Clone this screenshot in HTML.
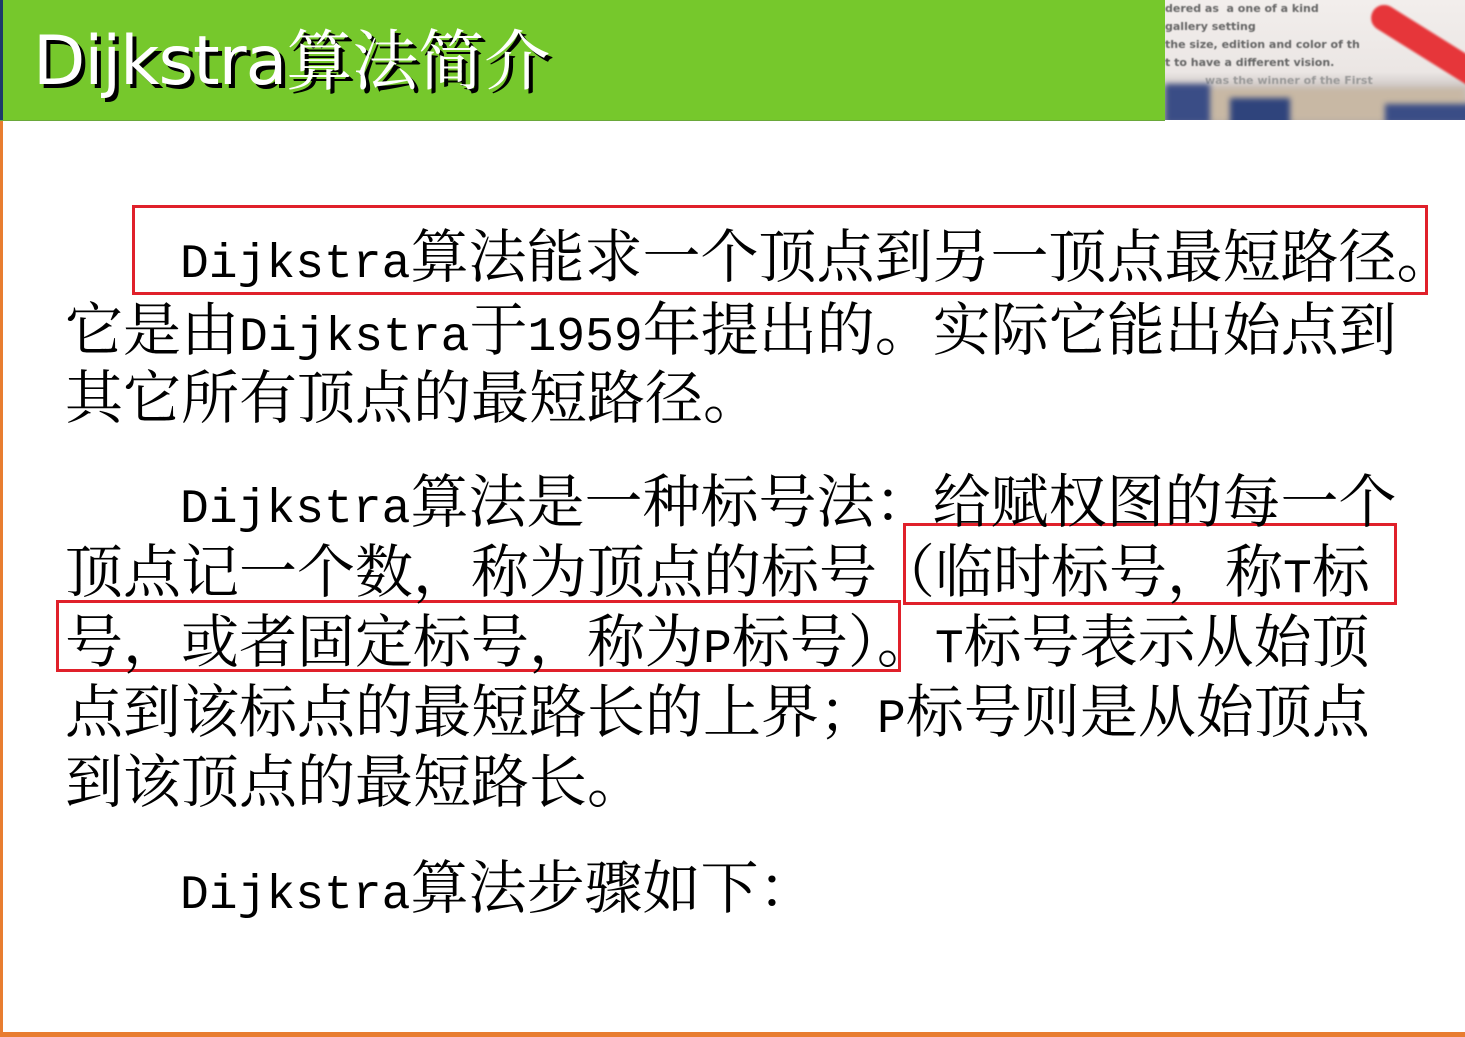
<!DOCTYPE html>
<html><head><meta charset="utf-8"><style>
body{margin:0;width:1465px;height:1037px;overflow:hidden;background:#fff;position:relative;font-family:"Noto Serif CJK SC","Noto Serif CJK JP","Noto Serif CJK",serif;}
.hdr{position:absolute;left:0;top:0;width:1165px;height:120px;background:#76c82c;border-bottom:1px solid #6aa83a;}
.lb{position:absolute;left:0;top:0;width:3px;height:120px;background:#1e3a6a;}
.ol{position:absolute;left:0;top:121px;width:3px;height:916px;background:#e87d30;}
.ob{position:absolute;left:0;top:1032px;width:1465px;height:5px;background:#e87d30;}
.title{position:absolute;left:33px;top:16px;font-size:66px;line-height:80px;color:#fff;white-space:nowrap;text-shadow:4px 4px 0 #000;}
.title .l{font-family:"DejaVu Sans","Liberation Sans",sans-serif;font-size:68px;letter-spacing:-1px}
.title .c{font-family:"Noto Serif CJK SC","Noto Serif CJK JP",serif;}
.photo{position:absolute;left:1165px;top:0;width:300px;height:120px;overflow:hidden;background:linear-gradient(180deg,#f2eeec 0%,#ebe6e4 60%,#c9c2c0 75%,#b7aca2 100%);}
.ln{position:absolute;font-family:"DejaVu Sans",sans-serif;font-weight:bold;font-size:11px;color:#666;white-space:nowrap;filter:blur(.6px)}
.t{position:absolute;font-size:58px;line-height:70px;white-space:nowrap;color:#000;}
.t .m{font-family:"Liberation Mono",monospace;font-size:48px;}
.box{position:absolute;border:3px solid #e0202a;box-sizing:border-box;}
</style></head><body>
<div class="hdr"></div><div class="lb"></div><div class="ol"></div><div class="ob"></div>
<div class="title"><span class="l">Dijkstra</span><span class="c">算法简介</span></div>
<div class="photo">
<div class="ln" style="left:0;top:2px">dered as &nbsp;a one of a kind</div>
<div class="ln" style="left:0;top:20px">gallery setting</div>
<div class="ln" style="left:0;top:38px">the size, edition and color of th</div>
<div class="ln" style="left:0;top:56px">t to have a different vision.</div>
<div class="ln" style="left:40px;top:74px;color:#999">was the winner of the First</div>
<div style="position:absolute;left:0;top:88px;width:300px;height:32px;background:#c8b8a4;filter:blur(3px)"></div>
<div style="position:absolute;left:0;top:84px;width:45px;height:40px;background:#3a4d86;filter:blur(3px)"></div>
<div style="position:absolute;left:65px;top:98px;width:60px;height:30px;background:#2f447c;filter:blur(3px)"></div>
<div style="position:absolute;left:220px;top:104px;width:90px;height:20px;background:#3a4d86;filter:blur(3px)"></div>
<div style="position:absolute;left:215px;top:0px;width:140px;height:26px;background:#e6363a;transform:rotate(32deg);transform-origin:0 0;border-radius:13px;filter:blur(1px)"></div>
</div>
<div class="box" style="left:132px;top:205px;width:1296px;height:90px"></div>
<div class="box" style="left:903px;top:523px;width:494px;height:82px"></div>
<div class="box" style="left:56px;top:600px;width:845px;height:72px"></div>
<div class="t" style="left:180px;top:217px"><span class="m">Dijkstra</span>算法能求一个顶点到另一顶点最短路径。</div>
<div class="t" style="left:65px;top:290px">它是由<span class="m">Dijkstra</span>于<span class="m">1959</span>年提出的。实际它能出始点到</div>
<div class="t" style="left:65px;top:358px">其它所有顶点的最短路径。</div>
<div class="t" style="left:180px;top:462px"><span class="m">Dijkstra</span>算法是一种标号法：给赋权图的每一个</div>
<div class="t" style="left:65px;top:532px">顶点记一个数，称为顶点的标号（临时标号，称<span class="m">T</span>标</div>
<div class="t" style="left:65px;top:602px">号，或者固定标号，称为<span class="m">P</span>标号）。<span class="m">T</span>标号表示从始顶</div>
<div class="t" style="left:65px;top:672px">点到该标点的最短路长的上界；<span class="m">P</span>标号则是从始顶点</div>
<div class="t" style="left:65px;top:742px">到该顶点的最短路长。</div>
<div class="t" style="left:180px;top:848px"><span class="m">Dijkstra</span>算法步骤如下：</div>
</body></html>
